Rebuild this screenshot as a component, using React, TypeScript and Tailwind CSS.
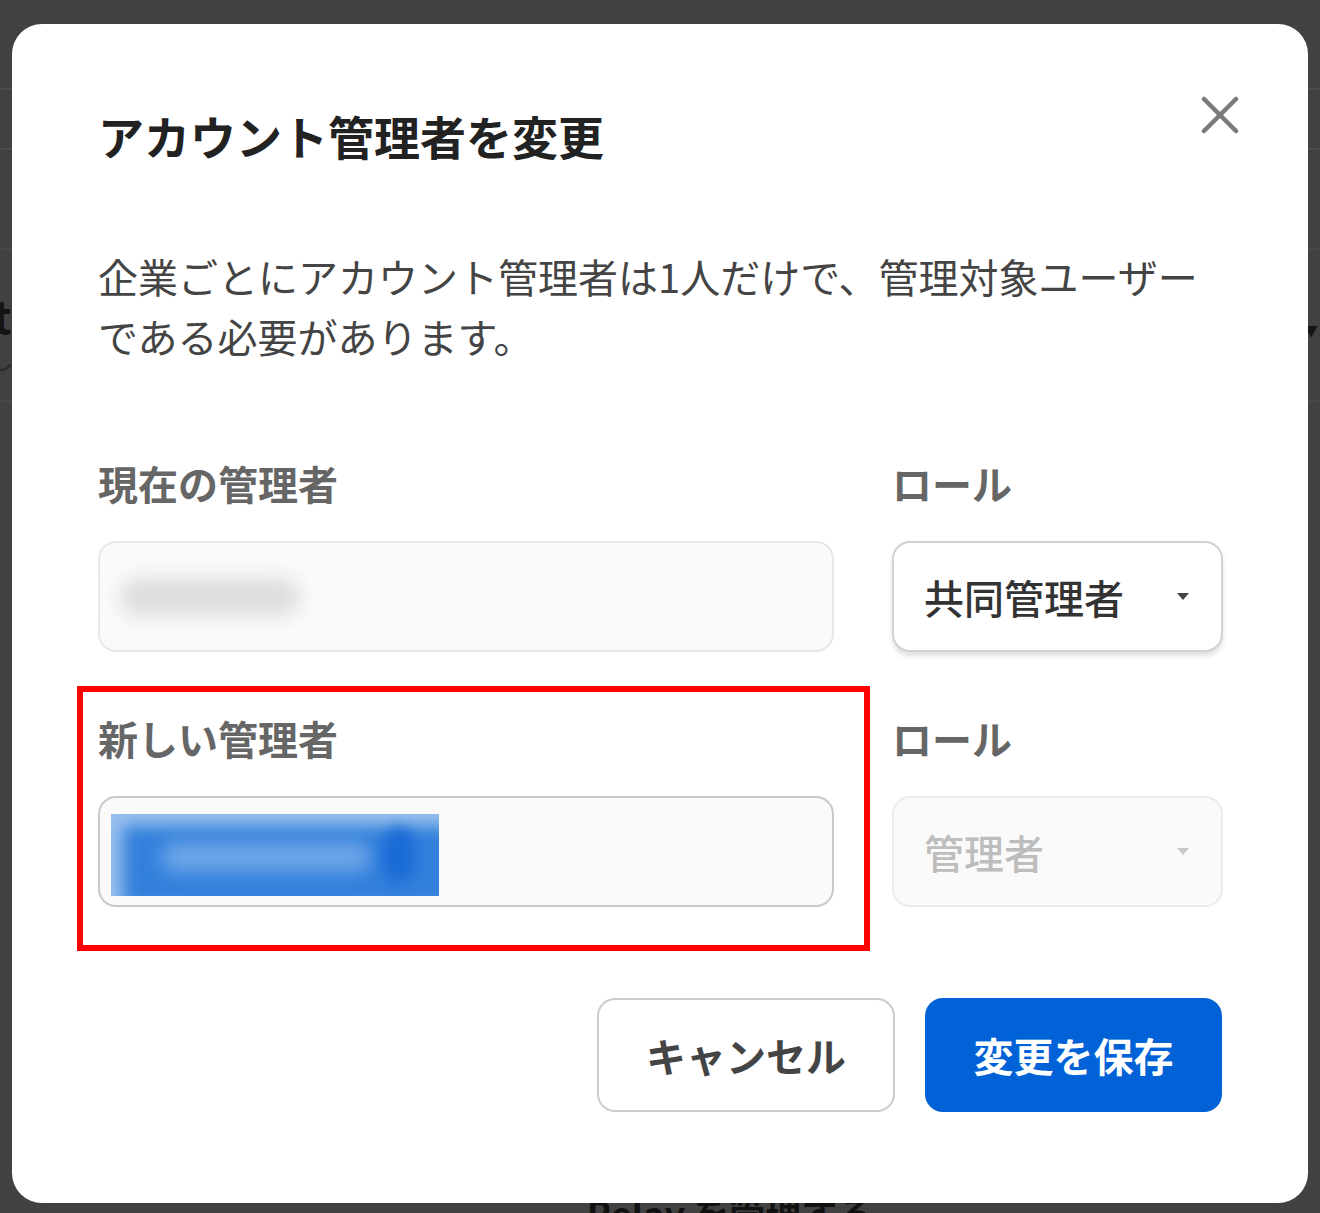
import React from 'react';

const FONT = '"Noto Sans CJK JP", "Noto Sans", sans-serif';

const Caret: React.FC<{ color: string }> = ({ color }) => (
  <svg width="12" height="7" viewBox="0 0 12 7" className="shrink-0">
    <polygon points="0,0 12,0 6,7" fill={color} />
  </svg>
);

const CloseIcon: React.FC = () => (
  <svg width="38" height="38" viewBox="0 0 38 38">
    <path d="M3 3 L35 35 M35 3 L3 35" stroke="#7a7a7a" strokeWidth="4.5" strokeLinecap="round" />
  </svg>
);

const App: React.FC = () => {
  return (
    <div className="relative w-[1320px] h-[1213px] overflow-hidden bg-[#414141]" style={{ fontFamily: FONT }}>
      {/* Page behind the overlay */}
      <div className="flex flex-col">
        <div className="h-[90px] border-b-2 border-[#4b4b4b]" />
        <div className="h-[60px] border-b-2 border-[#4b4b4b]" />
        <div className="h-[100px] border-b-2 border-[#474747]" />
        <div className="flex items-start justify-between h-[150px] pt-[40px]">
          <div className="flex flex-col">
            <span className="-ml-[7px] text-[44px] font-bold leading-[50px] text-[#141414]">t</span>
            <span className="-ml-[12px] text-[26px] leading-[36px] text-[#2a2a2a]">し</span>
          </div>
          <span className="mt-[30px] mr-[2px] text-[14px] text-[#141414]">▼</span>
        </div>
        <div className="h-[792px] border-t-2 border-[#474747]" />
        <div className="flex justify-center">
          <span className="ml-[140px] text-[36px] font-bold leading-[40px] text-[#111]">Relay を管理する</span>
        </div>
      </div>

      {/* Dialog */}
      <div className="absolute inset-0 pt-[24px] px-[12px]">
        <div className="w-[1296px] h-[1179px] rounded-[30px] bg-white px-[86px] pt-[77px] text-[#444]">
          {/* Header */}
          <div className="flex items-start justify-between">
            <h2 className="text-[46px] font-bold leading-[69px] text-[#222]">アカウント管理者を変更</h2>
            <button className="-mt-[16px] -mr-[28px] flex h-[60px] w-[60px] items-center justify-center">
              <CloseIcon />
            </button>
          </div>

          {/* Description */}
          <p className="mt-[76px] text-[40px] leading-[60px] text-[#444]">
            企業ごとにアカウント管理者は1人だけで、管理対象ユーザー
            <br />
            である必要があります。
          </p>

          {/* Fields */}
          <div className="mt-[87px] grid grid-cols-[736px_331px] gap-x-[58px]">
            <div>
              <div className="text-[40px] font-bold leading-[60px] text-[#666]">現在の管理者</div>
              <div className="mt-[28px] flex h-[111px] items-center rounded-[18px] border-2 border-[#e8e8e8] bg-[#fafafa] pl-[20px] overflow-hidden">
                <div className="h-[40px] w-[180px] rounded-full bg-[#dedede] blur-[9px]" />
              </div>
            </div>
            <div>
              <div className="text-[40px] font-bold leading-[60px] text-[#666]">ロール</div>
              <div className="mt-[28px] flex h-[111px] items-center justify-between rounded-[18px] border-2 border-[#d2d2d2] bg-white pl-[30px] pr-[32px] shadow-[0_4px_5px_rgba(0,0,0,0.12)]">
                <span className="text-[40px] font-medium leading-[60px] text-[#333]">共同管理者</span>
                <Caret color="#444" />
              </div>
            </div>

            <div className="relative mt-[56px]">
              <div className="text-[40px] font-bold leading-[60px] text-[#666]">新しい管理者</div>
              <div className="mt-[28px] flex h-[111px] items-start rounded-[18px] border-2 border-[#c9c9c9] bg-[#fafafa] pl-[11px] pt-[16px]">
                <div className="relative h-[82px] w-[328px] overflow-hidden bg-[#3280dc] shadow-[inset_12px_12px_16px_rgba(255,255,255,0.5)]">
                  <div className="absolute left-[50px] top-[28px] h-[30px] w-[210px] rounded-full bg-[#6ea5e8] blur-[9px]" />
                  <div className="absolute left-[272px] top-[14px] h-[54px] w-[32px] rounded-full bg-[#1a6ad6] blur-[7px]" />
                </div>
              </div>
              {/* annotation */}
              <div className="pointer-events-none absolute -left-[21px] -top-[22px] -right-[36px] -bottom-[44px] border-[6px] border-[#ff0000]" />
            </div>
            <div className="mt-[56px]">
              <div className="text-[40px] font-bold leading-[60px] text-[#666]">ロール</div>
              <div className="mt-[28px] flex h-[111px] items-center justify-between rounded-[18px] border-2 border-[#ececec] bg-[#fafafa] pl-[30px] pr-[32px]">
                <span className="text-[40px] font-medium leading-[60px] text-[#bdbdbd]">管理者</span>
                <Caret color="#c8c8c8" />
              </div>
            </div>
          </div>

          {/* Footer */}
          <div className="mt-[91px] flex justify-end gap-[30px]">
            <button className="flex h-[114px] w-[298px] items-center justify-center rounded-[18px] border-2 border-[#cccccc] bg-white text-[40px] font-bold text-[#444]">
              キャンセル
            </button>
            <button className="flex h-[114px] w-[297px] items-center justify-center rounded-[18px] bg-[#0062d6] text-[40px] font-bold text-white">
              変更を保存
            </button>
          </div>
        </div>
      </div>
    </div>
  );
};

export default App;
